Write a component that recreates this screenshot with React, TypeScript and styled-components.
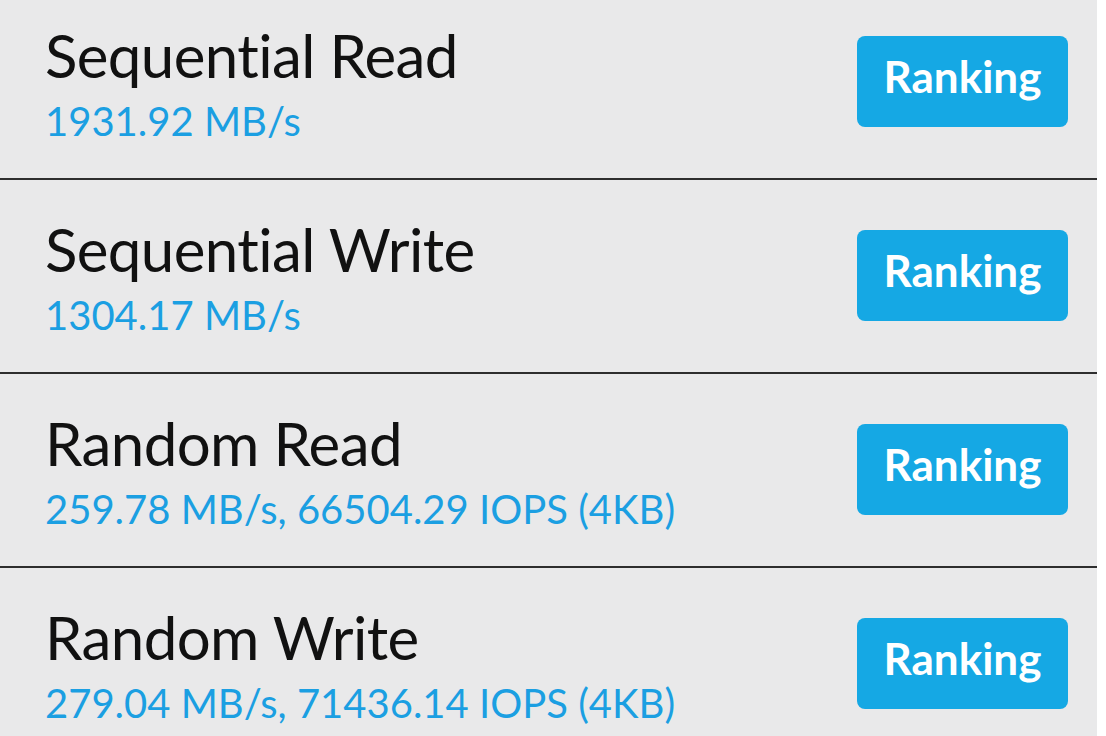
import React from 'react'
import styled, { createGlobalStyle } from 'styled-components'

const GlobalStyle = createGlobalStyle`
  html, body {
    margin: 0;
    padding: 0;
    background: #ffffff;
    overflow: hidden;
  }
`

const Page = styled.div`
  width: 1097px;
  height: 736px;
  background: #e9e9ea;
  overflow: hidden;
`

const List = styled.div`
  margin-top: -14px;
`

const Row = styled.div`
  display: flex;
  justify-content: space-between;
  align-items: flex-start;
  height: 192px;
  padding: 0 29px 0 45px;
  border-bottom: 2px solid #2e2e2e;
`

const Info = styled.div`
  padding-top: 39px;
  font-family: Lato, 'Open Sans', sans-serif;
`

const Title = styled.div`
  font-size: 60px;
  line-height: 60px;
  letter-spacing: -0.6px;
  color: #111111;
  white-space: nowrap;
`

const Value = styled.div`
  margin-top: 16px;
  font-size: 40px;
  line-height: 40px;
  color: #1b9fe2;
  white-space: nowrap;
`

const RankButton = styled.button`
  display: flex;
  align-items: center;
  justify-content: center;
  margin-top: 50px;
  width: 211px;
  height: 91px;
  padding: 0 0 12px;
  border: none;
  border-radius: 8px;
  background: #15a8e4;
  color: #ffffff;
  font-family: Lato, 'Open Sans', sans-serif;
  font-weight: 700;
  font-size: 44px;
  cursor: pointer;
`

const results = [
  { title: 'Sequential Read', value: '1931.92 MB/s' },
  { title: 'Sequential Write', value: '1304.17 MB/s' },
  { title: 'Random Read', value: '259.78 MB/s, 66504.29 IOPS (4KB)' },
  { title: 'Random Write', value: '279.04 MB/s, 71436.14 IOPS (4KB)' },
]

const App: React.FC = () => (
  <>
    <GlobalStyle />
    <Page>
      <List>
        {results.map((r) => (
          <Row key={r.title}>
            <Info>
              <Title>{r.title}</Title>
              <Value>{r.value}</Value>
            </Info>
            <RankButton>Ranking</RankButton>
          </Row>
        ))}
      </List>
    </Page>
  </>
)

export default App
